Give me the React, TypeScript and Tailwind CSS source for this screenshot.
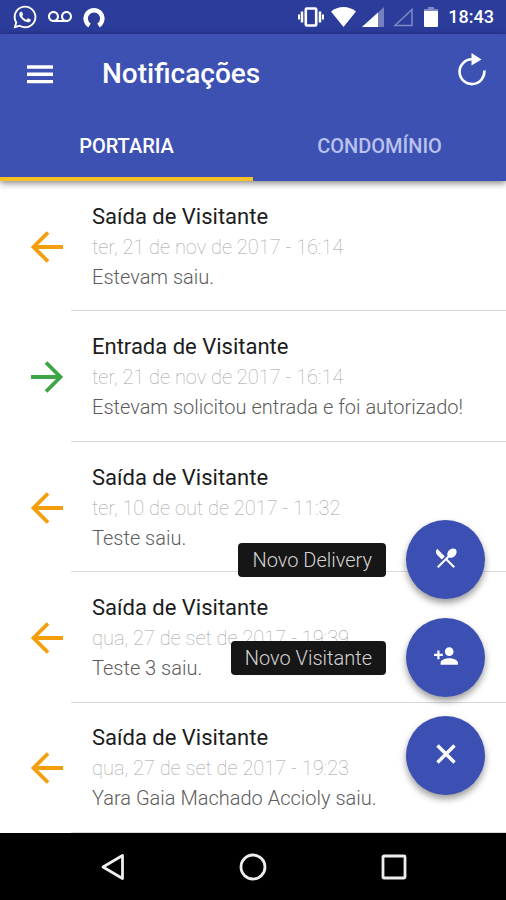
import React, { useState } from 'react';
import { FaWhatsapp } from 'react-icons/fa';
import { MdPersonAdd, MdRestaurantMenu, MdVoicemail } from 'react-icons/md';

type Notification = {
  id: number;
  kind: 'in' | 'out';
  title: string;
  date: string;
  text: string;
};

const notifications: Notification[] = [
  { id: 1, kind: 'out', title: 'Saída de Visitante', date: 'ter, 21 de nov de 2017 - 16:14', text: 'Estevam saiu.' },
  { id: 2, kind: 'in', title: 'Entrada de Visitante', date: 'ter, 21 de nov de 2017 - 16:14', text: 'Estevam solicitou entrada e foi autorizado!' },
  { id: 3, kind: 'out', title: 'Saída de Visitante', date: 'ter, 10 de out de 2017 - 11:32', text: 'Teste saiu.' },
  { id: 4, kind: 'out', title: 'Saída de Visitante', date: 'qua, 27 de set de 2017 - 19:39', text: 'Teste 3 saiu.' },
  { id: 5, kind: 'out', title: 'Saída de Visitante', date: 'qua, 27 de set de 2017 - 19:23', text: 'Yara Gaia Machado Accioly saiu.' },
];

function StatusBar() {
  return (
    <div className="h-[34px] shrink-0 bg-[#2c3c9b] text-white flex items-center justify-between px-3">
      <div className="flex items-center gap-2.5">
        <FaWhatsapp size={26} />
        <MdVoicemail size={24} />
        <svg width="24" height="24" viewBox="0 0 24 24" fill="none" stroke="currentColor" strokeWidth="4.5">
          <path d="M7.5 20.5 A8.3 8.3 0 1 1 16.5 20.5" />
        </svg>
      </div>
      <div className="flex items-center gap-1.5">
        <svg width="28" height="24" viewBox="0 0 28 24" fill="none" stroke="currentColor">
          <rect x="8.8" y="3.5" width="10.400" height="17" rx="1" strokeWidth="2.600" />
          <path d="M5 6.500v11M23 6.500v11" strokeWidth="2.500" />
          <path d="M2 9.500v5M26 9.500v5" strokeWidth="2" />
        </svg>
        <svg width="25" height="20" viewBox="0 0 25 20" fill="currentColor">
          <path d="M12.500 20 L0 4.500 C3.500 1.500 8 0 12.500 0 S21.500 1.500 25 4.500 Z" />
        </svg>
        <svg width="22" height="20" viewBox="0 0 22 20" fill="currentColor">
          <path d="M0 20 L22 0 V20 Z" opacity="0.35" />
          <path d="M0 20 L16 5.500 V20 Z" />
        </svg>
        <svg className="ml-0.5" width="22" height="20" viewBox="0 0 22 20" fill="none" stroke="currentColor" strokeWidth="1.500" opacity="0.4">
          <path d="M3 18.500 L20 2.500 V18.500 Z" />
        </svg>
        <svg className="mx-1" width="14" height="20" viewBox="0 0 14 20" fill="currentColor">
          <path d="M4 0h6v2h4v3H0V2h4z" opacity="0.4" />
          <path d="M0 4h14v15a1 1 0 0 1-1 1H1a1 1 0 0 1-1-1z" />
        </svg>
        <span className="text-lg leading-6 font-medium">18:43</span>
      </div>
    </div>
  );
}

function DirectionArrow({ kind }: { kind: 'in' | 'out' }) {
  return (
    <svg
      className={kind === 'in' ? 'text-[#3fa648]' : 'text-[#f59e0b]'}
      width="34"
      height="34"
      viewBox="0 0 34 34"
      fill="none"
      stroke="currentColor"
      strokeWidth="3.800"
    >
      {kind === 'in' ? <path d="M1 17H31M16 2.500L30.500 17L16 31.500" /> : <path d="M33 17H3M18 2.500L3.500 17L18 31.500" />}
    </svg>
  );
}

function NotificationRow({ item }: { item: Notification }) {
  return (
    <li className="flex-1 flex items-stretch pl-[30px]">
      <div className="w-[41px] shrink-0 flex items-center pt-px">
        <DirectionArrow kind={item.kind} />
      </div>
      <div className="flex-1 min-w-0 flex flex-col justify-center pl-[21px] pt-[18px] pb-4 border-b border-[#d9d9d9]">
        <h2 className="text-[22px] leading-[30px] text-[#1c1c1c]">{item.title}</h2>
        <p className="text-[20px] leading-[30px] font-thin text-[#a3a3a3]">{item.date}</p>
        <p className="text-[20px] leading-[30px] font-light text-[#5c5c5c]">{item.text}</p>
      </div>
    </li>
  );
}

function ActionButton({ label, showLabel, onClick, children }: {
  label: string;
  showLabel?: boolean;
  onClick?: () => void;
  children: React.ReactNode;
}) {
  return (
    <div className="flex items-center gap-5">
      {showLabel && (
        <span className="h-[34px] px-[14px] rounded-sm bg-[#161616] text-[#d4d4d4] text-[20px] leading-[34px] font-light">{label}</span>
      )}
      <button
        aria-label={label}
        onClick={onClick}
        className="size-[79px] pb-1 rounded-full bg-[#3c50b3] text-white flex items-center justify-center shadow-[0_4px_7px_rgba(0,0,0,0.4)]"
      >
        {children}
      </button>
    </div>
  );
}

export default function App() {
  const [tab, setTab] = useState('portaria');
  const [open, setOpen] = useState(true);

  return (
    <div className="min-h-screen flex flex-col bg-white font-['Roboto',sans-serif]">
      <StatusBar />

      <header className="relative z-10 shrink-0 bg-[#3d51b3] text-white shadow-[0_2px_7px_rgba(0,0,0,0.5)]">
        <div className="h-[76px] flex items-center pt-1 pl-[27px] pr-5">
          <button aria-label="Menu">
            <svg width="26" height="20" viewBox="0 0 26 20" stroke="currentColor" strokeWidth="3.400">
              <path d="M0 3H26M0 10.300H26M0 17.600H26" />
            </svg>
          </button>
          <h1 className="flex-1 ml-[49px] text-[28px] leading-9 font-medium">Notificações</h1>
          <button aria-label="Atualizar" className="mb-2">
            <svg width="28" height="34" viewBox="0 0 28 34" fill="none" stroke="currentColor" strokeWidth="2.600">
              <path d="M26.300 17.500A12.400 12.400 0 1 1 14 6.300" />
              <path d="M13.500 0L23.500 6.500L13.500 12.500Z" fill="currentColor" stroke="none" />
            </svg>
          </button>
        </div>
        <div className="flex" role="tablist">
          <button
            role="tab"
            aria-selected={tab === 'portaria'}
            onClick={() => setTab('portaria')}
            className={`flex-1 h-[71px] pt-1 text-[20px] font-medium border-b-4 ${tab === 'portaria' ? 'border-[#f5c024]' : 'border-transparent text-[#b9c2ee]'}`}
          >
            PORTARIA
          </button>
          <button
            role="tab"
            aria-selected={tab === 'condominio'}
            onClick={() => setTab('condominio')}
            className={`flex-1 h-[71px] pt-1 text-[20px] font-medium border-b-4 ${tab === 'condominio' ? 'border-[#f5c024]' : 'border-transparent text-[#b9c2ee]'}`}
          >
            CONDOMÍNIO
          </button>
        </div>
      </header>

      <main className="relative flex-1 flex flex-col">
        <ul className="flex-1 flex flex-col">
          {notifications.map((item) => (
            <NotificationRow key={item.id} item={item} />
          ))}
        </ul>

        <div className="absolute right-[21px] bottom-[38px] flex flex-col items-end gap-[19px]">
          {open && (
            <>
              <ActionButton label="Novo Delivery" showLabel>
                <MdRestaurantMenu size={26} />
              </ActionButton>
              <ActionButton label="Novo Visitante" showLabel>
                <MdPersonAdd size={26} />
              </ActionButton>
            </>
          )}
          <ActionButton label={open ? 'Fechar' : 'Abrir'} onClick={() => setOpen(!open)}>
            <svg width="20" height="20" viewBox="0 0 20 20" stroke="currentColor" strokeWidth="3.400">
              <path d={open ? 'M1.500 1.500L18.500 18.500M18.500 1.500L1.500 18.500' : 'M10 0V20M0 10H20'} />
            </svg>
          </ActionButton>
        </div>
      </main>

      <nav className="h-[67px] shrink-0 bg-black text-[#eeeeee] flex items-center justify-center gap-[113px]">
        <button aria-label="Voltar">
          <svg width="28" height="28" viewBox="0 0 28 28" fill="none" stroke="currentColor" strokeWidth="2.800" strokeLinejoin="round">
            <path d="M5 14L24.500 2.500V25.500Z" />
          </svg>
        </button>
        <button aria-label="Início">
          <svg width="28" height="28" viewBox="0 0 28 28" fill="none" stroke="currentColor" strokeWidth="2.800">
            <circle cx="14" cy="14" r="12" />
          </svg>
        </button>
        <button aria-label="Recentes">
          <svg width="28" height="28" viewBox="0 0 28 28" fill="none" stroke="currentColor" strokeWidth="2.800">
            <rect x="3" y="3" width="22" height="22" rx="1" />
          </svg>
        </button>
      </nav>
    </div>
  );
}
